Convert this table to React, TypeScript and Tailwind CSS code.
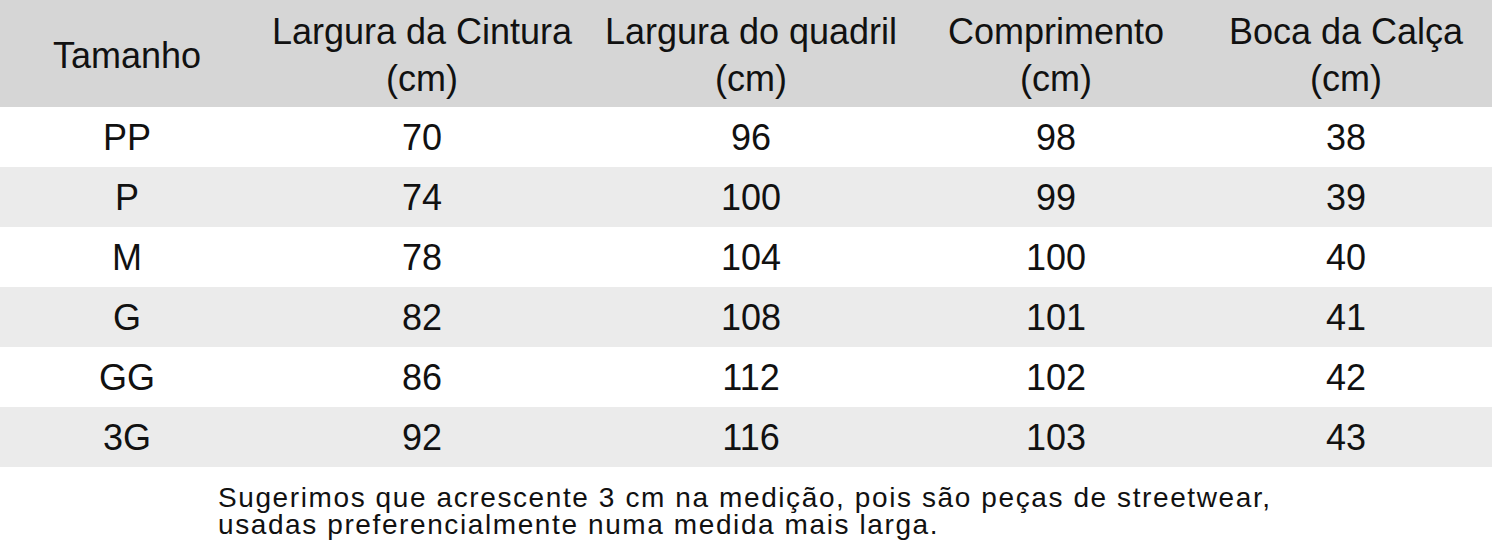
const headers: { title: string; unit?: string }[] = [
  { title: 'Tamanho' },
  { title: 'Largura da Cintura', unit: '(cm)' },
  { title: 'Largura do quadril', unit: '(cm)' },
  { title: 'Comprimento', unit: '(cm)' },
  { title: 'Boca da Calça', unit: '(cm)' },
]

const rows: string[][] = [
  ['PP', '70', '96', '98', '38'],
  ['P', '74', '100', '99', '39'],
  ['M', '78', '104', '100', '40'],
  ['G', '82', '108', '101', '41'],
  ['GG', '86', '112', '102', '42'],
  ['3G', '92', '116', '103', '43'],
]

const cols = 'grid grid-cols-[254px_336px_322px_288px_292px]'

export default function App() {
  return (
    <div
      className="w-[1492px] h-[557px] bg-white text-[#111] overflow-hidden"
      style={{ fontFamily: '"Liberation Sans", Arial, Helvetica, sans-serif' }}
    >
      {/* Header */}
      <div className={`${cols} h-[107px] bg-[#d6d6d6] text-[36px]`}>
        {headers.map((h) => (
          <div key={h.title} className="flex flex-col items-center justify-center pt-[3px] leading-[47px] whitespace-nowrap">
            <span>{h.title}</span>
            {h.unit && <span>{h.unit}</span>}
          </div>
        ))}
      </div>

      {/* Rows */}
      {rows.map((r, i) => (
        <div
          key={r[0]}
          className={`${cols} h-[60px] text-[36px] ${i % 2 === 1 ? 'bg-[#ebebeb]' : 'bg-white'}`}
        >
          {r.map((v, j) => (
            <div key={j} className="flex items-center justify-center pt-[1px]">
              {v}
            </div>
          ))}
        </div>
      ))}

      {/* Note */}
      <div className="pt-[17px] pl-[218px] text-[28px] leading-[27px] tracking-[1.6px]">
        <p>Sugerimos que acrescente 3 cm na medição, pois são peças de streetwear,</p>
        <p>usadas preferencialmente numa medida mais larga.</p>
      </div>
    </div>
  )
}
